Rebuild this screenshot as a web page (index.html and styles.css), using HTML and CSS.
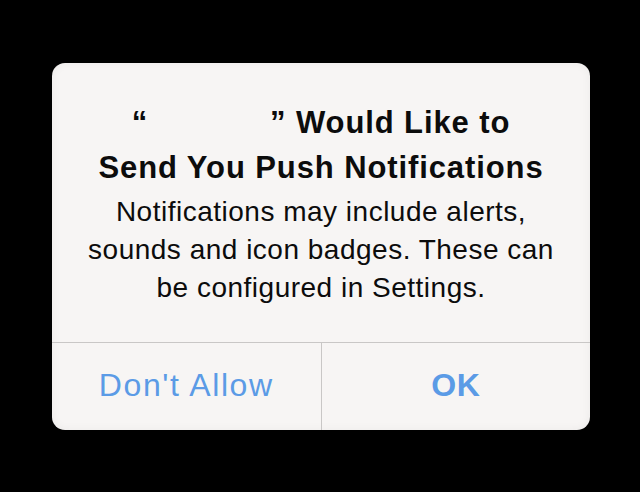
FILE: index.html
```html
<!DOCTYPE html>
<html>
<head>
<meta charset="utf-8">
<link rel="stylesheet" href="styles.css">
</head>
<body>
<div class="screen">
  <div class="alert">
    <div class="content">
      <div class="title">
        <div class="line">“<span class="blank"></span>” Would Like to</div>
        <div class="line">Send You Push Notifications</div>
      </div>
      <div class="message">Notifications may include alerts,<br>sounds and icon badges. These can<br>be configured in Settings.</div>
    </div>
    <div class="buttons">
      <div class="btn">Don't Allow</div>
      <div class="btn primary">OK</div>
    </div>
  </div>
</div>
</body>
</html>
```
FILE: styles.css
```css
html, body {
  margin: 0;
  padding: 0;
  background: #000;
}
.screen {
  width: 640px;
  height: 492px;
  padding: 63px 0 0 52px;
  box-sizing: border-box;
  font-family: "Liberation Sans", Arial, sans-serif;
}
.alert {
  width: 538px;
  height: 367px;
  background: #f7f5f4;
  border-radius: 13px;
  display: flex;
  flex-direction: column;
  overflow: hidden;
  box-shadow: inset 0 0 10px rgba(0, 0, 0, 0.05);
}
.content {
  height: 279px;
  box-sizing: border-box;
  padding-top: 37px;
  text-align: center;
  color: #0c0c0c;
}
.title {
  font-weight: bold;
  font-size: 31px;
  line-height: 45px;
  letter-spacing: 0.9px;
}
.blank {
  display: inline-block;
  width: 122px;
}
.message {
  margin-top: 3px;
  font-size: 28px;
  line-height: 38px;
  letter-spacing: 0.5px;
}
.buttons {
  flex: 1;
  display: flex;
  border-top: 1px solid #c9c7c6;
}
.btn {
  flex: 1;
  display: flex;
  align-items: center;
  justify-content: center;
  font-size: 32px;
  letter-spacing: 1.6px;
  color: #5b9be6;
  padding-bottom: 2px;
}
.btn + .btn {
  border-left: 1px solid #c9c7c6;
}
.primary {
  font-weight: bold;
  letter-spacing: 0.5px;
}
```
